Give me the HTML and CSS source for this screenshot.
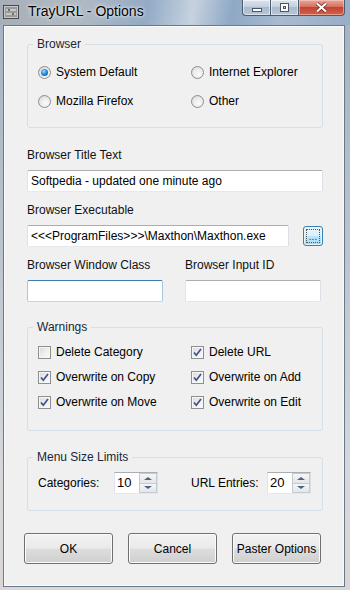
FILE: index.html
```html
<!DOCTYPE html>
<html lang="en">
<head>
  <meta charset="UTF-8">
  <title>TrayURL - Options</title>
  <link rel="stylesheet" href="styles.css">
</head>
<body>
  <div class="window">
    <div class="titlebar">
      <svg class="app-icon" width="16" height="14" viewBox="0 0 16 14">
        <rect x="0.5" y="0.5" width="15" height="13" fill="#9a9a9a" stroke="#4a4a4a"/>
        <rect x="1.5" y="1.5" width="13" height="11" fill="none" stroke="#c8c8c8"/>
        <path d="M3 5h10M3 9h10" stroke="#f4f4f4" stroke-width="1.2"/>
        <path d="M6 4v2M10 8v2" stroke="#333" stroke-width="1.2"/>
      </svg>
      <span class="title">TrayURL - Options</span>
      <div class="caption-btns">
        <span class="cap min"><i></i></span>
        <span class="cap max"><i></i></span>
        <span class="cap close">
          <svg width="13" height="11" viewBox="0 0 13 11"><path d="M2 1.5l9 8M11 1.5l-9 8" stroke="#6b1d14" stroke-width="3.6"/><path d="M2 1.5l9 8M11 1.5l-9 8" stroke="#fff" stroke-width="2.2"/></svg>
        </span>
      </div>
    </div>

    <div class="client">
      <fieldset class="group group-browser">
        <legend>Browser</legend>
        <div class="opt-grid">
          <label class="opt"><span class="radio checked"></span>System Default</label>
          <label class="opt"><span class="radio"></span>Internet Explorer</label>
          <label class="opt"><span class="radio"></span>Mozilla Firefox</label>
          <label class="opt"><span class="radio"></span>Other</label>
        </div>
      </fieldset>

      <div class="field-label first">Browser Title Text</div>
      <div class="textbox">Softpedia - updated one minute ago</div>

      <div class="field-label">Browser Executable</div>
      <div class="exec-row">
        <div class="textbox exec">&lt;&lt;&lt;ProgramFiles&gt;&gt;&gt;\Maxthon\Maxthon.exe</div>
        <button class="browse-btn"><span>...</span></button>
      </div>

      <div class="pair">
        <div>
          <div class="field-label">Browser Window Class</div>
          <div class="textbox focused"></div>
        </div>
        <div>
          <div class="field-label">Browser Input ID</div>
          <div class="textbox"></div>
        </div>
      </div>

      <fieldset class="group group-warn">
        <legend>Warnings</legend>
        <div class="opt-grid checks">
          <label class="opt"><span class="check"></span>Delete Category</label>
          <label class="opt"><span class="check"><svg width="11" height="11" viewBox="0 0 11 11"><path d="M2 5.5l2.3 2.7L9 2" fill="none" stroke="#3e4f8c" stroke-width="1.7"/></svg></span>Delete URL</label>
          <label class="opt"><span class="check"><svg width="11" height="11" viewBox="0 0 11 11"><path d="M2 5.5l2.3 2.7L9 2" fill="none" stroke="#3e4f8c" stroke-width="1.7"/></svg></span>Overwrite on Copy</label>
          <label class="opt"><span class="check"><svg width="11" height="11" viewBox="0 0 11 11"><path d="M2 5.5l2.3 2.7L9 2" fill="none" stroke="#3e4f8c" stroke-width="1.7"/></svg></span>Overwrite on Add</label>
          <label class="opt"><span class="check"><svg width="11" height="11" viewBox="0 0 11 11"><path d="M2 5.5l2.3 2.7L9 2" fill="none" stroke="#3e4f8c" stroke-width="1.7"/></svg></span>Overwrite on Move</label>
          <label class="opt"><span class="check"><svg width="11" height="11" viewBox="0 0 11 11"><path d="M2 5.5l2.3 2.7L9 2" fill="none" stroke="#3e4f8c" stroke-width="1.7"/></svg></span>Overwrite on Edit</label>
        </div>
      </fieldset>

      <fieldset class="group group-limits">
        <legend>Menu Size Limits</legend>
        <div class="limits-row">
          <span>Categories:</span>
          <div class="spinner"><span class="value">10</span><span class="spin-btns"><span class="up"></span><span class="down"></span></span></div>
          <span></span>
          <span>URL Entries:</span>
          <div class="spinner"><span class="value">20</span><span class="spin-btns"><span class="up"></span><span class="down"></span></span></div>
        </div>
      </fieldset>

      <div class="button-row">
        <button class="btn">OK</button>
        <button class="btn">Cancel</button>
        <button class="btn">Paster Options</button>
      </div>
    </div>
  </div>
</body>
</html>
```

FILE: styles.css
```css
* { margin: 0; padding: 0; box-sizing: border-box; }
body {
  width: 350px;
  height: 590px;
  overflow: hidden;
  font-family: 'Liberation Sans', Arial, sans-serif;
  font-size: 12px;
  color: #000;
  background: linear-gradient(180deg, #a3b2c2 0%, #b9c3cd 40%, #d6d8db 80%, #dcd6d6 100%);
}
.window {
  height: 590px;
  display: flex;
  flex-direction: column;
}

/* title bar */
.titlebar {
  height: 25px;
  flex-shrink: 0;
  display: flex;
  align-items: flex-start;
  background: linear-gradient(100deg, #a6aeb7 0%, #b2bac3 22%, #93abc6 42%, #c6d2df 55%, #8ea8c5 66%, #a7bad0 80%, #98aec6 100%);
}
.app-icon { margin: 5px 0 0 3px; flex-shrink: 0; }
.title {
  margin: 3px 0 0 9px;
  font-size: 14px;
  line-height: 17px;
  text-shadow: 0 0 5px rgba(255,255,255,0.9), 0 0 2px rgba(255,255,255,0.8);
}
.caption-btns {
  margin-left: auto;
  margin-right: 5px;
  display: flex;
  height: 16px;
}
.cap {
  height: 16px;
  display: flex;
  align-items: center;
  justify-content: center;
  border: 1px solid #4d5b6c;
  border-top: none;
}
.cap.min, .cap.max {
  width: 28px;
  background: linear-gradient(180deg, #dce4ed 0%, #c3d0de 45%, #a9bbcf 50%, #b6c7da 100%);
  box-shadow: inset 0 0 0 1px rgba(255,255,255,0.5);
}
.cap.min { border-radius: 0 0 0 4px; border-right: none; }
.cap.max { border-right: none; }
.cap.min i {
  width: 10px;
  height: 4px;
  margin-top: 5px;
  background: #fff;
  border: 1px solid #4a5666;
}
.cap.max i {
  width: 9px;
  height: 9px;
  border: 1px solid #4a5666;
  box-shadow: inset 0 0 0 2px #fff, inset 0 0 0 3px #4a5666;
  background: #c7d3e0;
}
.cap.close {
  width: 47px;
  border-radius: 0 0 4px 0;
  background: linear-gradient(180deg, #e7a79c 0%, #d6705f 45%, #c5432f 50%, #d0634c 100%);
  box-shadow: inset 0 0 0 1px rgba(255,220,210,0.5);
}

/* client area */
.client {
  flex: 1;
  margin: 0 5px 3px 3px;
  border: 1px solid #69798c;
  background: #f0f0f0;
  box-shadow: inset 0 0 0 1px #fafafa;
  padding: 11px 0 0 23px;
}

.group {
  width: 296px;
  min-width: 0;
  border: 1px solid #d5dfe5;
  border-radius: 3px;
  padding: 11px 0 16px 10px;
}
.group legend {
  margin-left: -5px;
  padding: 0 4px;
  line-height: 14px;
  color: #1b2637;
}
.group-warn { margin-top: 18px; padding-top: 8px; padding-bottom: 18px; }
.group-limits { margin-top: 19px; padding-top: 8px; padding-bottom: 16px; }

.opt-grid {
  display: grid;
  grid-template-columns: 153px 1fr;
  grid-auto-rows: 20px;
  row-gap: 9px;
}
.opt-grid.checks { row-gap: 5px; }
.opt {
  display: flex;
  align-items: center;
  gap: 5px;
  white-space: nowrap;
}
.radio {
  width: 13px;
  height: 13px;
  flex-shrink: 0;
  border-radius: 50%;
  border: 1px solid #8c8e90;
  background: radial-gradient(circle at 60% 65%, #fcfcfc 0%, #e8e8e8 55%, #cfcfcf 100%);
  display: flex;
  align-items: center;
  justify-content: center;
}
.radio.checked::after {
  content: "";
  width: 7px;
  height: 7px;
  border-radius: 50%;
  background: radial-gradient(circle at 40% 35%, #9fdcff 0%, #2a8ad6 45%, #0c4a84 100%);
}
.check {
  width: 13px;
  height: 13px;
  flex-shrink: 0;
  border: 1px solid #8e8f8f;
  background: linear-gradient(135deg, #d9d9d9 0%, #f1f1f1 60%, #fbfbfb 100%);
  box-shadow: inset 0 0 0 1px #f6f6f6;
  display: flex;
  align-items: center;
  justify-content: center;
}
.check svg { display: block; }

.field-label {
  margin-top: 11px;
  line-height: 14px;
  color: #111;
  white-space: nowrap;
}
.field-label.first { margin-top: 20px; }
.textbox {
  margin-top: 8px;
  width: 296px;
  height: 22px;
  padding-left: 3px;
  line-height: 20px;
  background: #fff;
  border: 1px solid;
  border-color: #abadb3 #dbdfe6 #e3e9ef #e2e3ea;
  border-radius: 2px;
  white-space: nowrap;
  overflow: hidden;
}
.textbox.focused { border-color: #3d7bad #a4c9e3 #b7d9ed #a4c9e3; }

.exec-row {
  display: flex;
  align-items: flex-start;
  gap: 14px;
}
.textbox.exec { width: 262px; }
.browse-btn {
  margin-top: 9px;
  width: 20px;
  height: 20px;
  border: 1px solid #3c7fb1;
  border-radius: 3px;
  background: linear-gradient(180deg, #eaf6fd 0%, #d9f0fc 50%, #bee6fd 50%, #a7d9f5 100%);
  box-shadow: inset 0 0 0 1px #e6f4fb;
  padding: 2px;
  font-family: 'Liberation Sans', Arial, sans-serif;
}
.browse-btn span {
  display: block;
  height: 14px;
  border: 1px dotted #555;
  font-size: 10px;
  line-height: 14px;
  text-align: center;
  color: #333;
}

.pair {
  display: grid;
  grid-template-columns: 136px 136px;
  column-gap: 22px;
}
.pair .textbox { width: 136px; }

.limits-row {
  display: grid;
  grid-template-columns: 76px 44px 33px 76px 44px;
  height: 22px;
  align-items: center;
  white-space: nowrap;
}
.spinner {
  display: flex;
  height: 22px;
  background: #fff;
  border: 1px solid;
  border-color: #abadb3 #dbdfe6 #e3e9ef #e2e3ea;
}
.spinner .value {
  flex: 1;
  padding-left: 2px;
  font-size: 13px;
  line-height: 20px;
}
.spin-btns {
  width: 18px;
  display: flex;
  flex-direction: column;
}
.spin-btns span {
  flex: 1;
  border: 1px solid #c3cad3;
  background: linear-gradient(180deg, #f6f6f6 0%, #e4e6e9 100%);
  display: flex;
  align-items: center;
  justify-content: center;
}
.spin-btns .up { border-bottom: none; }
.spin-btns .up::after {
  content: "";
  border-left: 4px solid transparent;
  border-right: 4px solid transparent;
  border-bottom: 3px solid #4d6185;
}
.spin-btns .down::after {
  content: "";
  border-left: 4px solid transparent;
  border-right: 4px solid transparent;
  border-top: 3px solid #4d6185;
}

.button-row {
  display: flex;
  gap: 15px;
  margin: 22px 0 0 -3px;
}
.btn {
  width: 89px;
  height: 31px;
  border: 1px solid #707070;
  border-radius: 3px;
  background: linear-gradient(180deg, #f2f2f2 0%, #ebebeb 48%, #dddddd 52%, #cfcfcf 100%);
  box-shadow: inset 0 0 0 1px #fbfbfb;
  font-family: 'Liberation Sans', Arial, sans-serif;
  font-size: 12px;
  color: #000;
}
```
